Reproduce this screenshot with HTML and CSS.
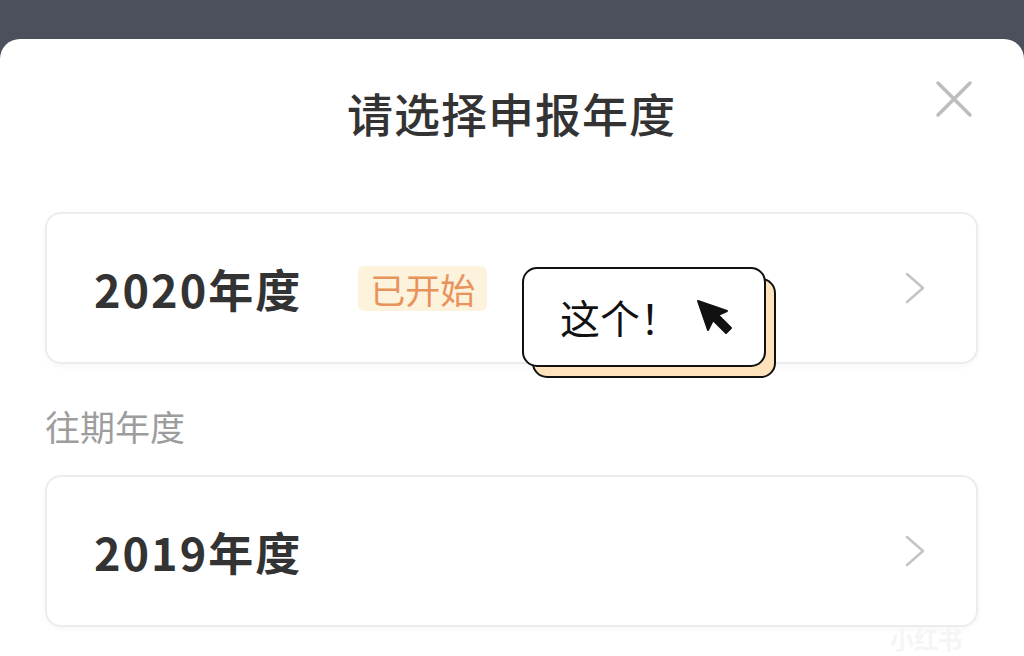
FILE: index.html
```html
<!DOCTYPE html>
<html lang="zh-CN">

<head>
  <meta charset="UTF-8">
  <meta name="viewport" content="width=device-width, initial-scale=1.0">
  <title>请选择申报年度</title>
  <link rel="stylesheet" href="styles.css">
</head>

<body>
  <div class="topbar"></div>
  <div class="sheet">
    <h1 class="title">请选择申报年度</h1>
    <button class="close" aria-label="关闭">
      <svg width="38" height="38" viewBox="0 0 38 38">
        <path d="M3 3 L35 35 M35 3 L3 35" stroke="#bdbdbd" stroke-width="3.5" stroke-linecap="round" fill="none" />
      </svg>
    </button>

    <div class="card current">
      <span class="year">2020年度</span>
      <span class="badge">已开始</span>
      <svg class="chevron" width="22" height="34" viewBox="0 0 22 34">
        <path d="M3 3 L19 17 L3 31" stroke="#c4c4c4" stroke-width="2.5" stroke-linecap="round" stroke-linejoin="round" fill="none" />
      </svg>
      <div class="tip">
        <div class="tip-back"></div>
        <div class="tip-front">
          <span>这个！</span>
          <svg width="38" height="36" viewBox="0 0 38 36">
            <path d="M2 2 L31 12 L22 16 L35 29 L30 34 L17 21 L12 31 Z" fill="#111" stroke="#111" stroke-width="2" stroke-linejoin="round" />
          </svg>
        </div>
      </div>
    </div>

    <div class="section">往期年度</div>

    <div class="card">
      <span class="year">2019年度</span>
      <svg class="chevron" width="22" height="34" viewBox="0 0 22 34">
        <path d="M3 3 L19 17 L3 31" stroke="#c4c4c4" stroke-width="2.5" stroke-linecap="round" stroke-linejoin="round" fill="none" />
      </svg>
    </div>

    <div class="mark">小红书</div>
  </div>
</body>

</html>
```

FILE: styles.css
```css
body {
  margin: 0;
  background-color: #4b505c;
  font-family: "Noto Sans CJK SC", "Noto Sans", sans-serif;
  color: #333;
  height: 656px;
  overflow: hidden;
}

.topbar {
  height: 39px;
}

.sheet {
  position: relative;
  background-color: white;
  border-radius: 20px 20px 0 0;
  height: 617px;
  padding: 50px 46px 0 45px;
  box-sizing: border-box;
}

.title {
  margin: 0 0 77px;
  font-size: 46px;
  line-height: 1;
  font-weight: 500;
  text-align: center;
  letter-spacing: 1px;
  color: #333;
}

.close {
  position: absolute;
  top: 41px;
  right: 51px;
  padding: 0;
  border: none;
  background: none;
}

.card {
  position: relative;
  display: flex;
  align-items: center;
  height: 152px;
  padding: 0 50px 0 47px;
  box-sizing: border-box;
  border: 2px solid #ececec;
  border-radius: 16px;
  box-shadow: 0 2px 6px rgba(0, 0, 0, 0.04);
}

.year {
  font-size: 45px;
  font-weight: 700;
  line-height: 1;
  letter-spacing: 2px;
  color: #333;
}

.badge {
  margin-left: 56px;
  padding: 5px 12px;
  font-size: 35px;
  line-height: 35px;
  background-color: #fdf2dc;
  color: #e8935c;
  border-radius: 6px;
}

.chevron {
  margin-left: auto;
}

.section {
  margin: 44px 0 32px;
  font-size: 35px;
  line-height: 1;
  color: #9d9d9d;
}

.tip {
  position: absolute;
  left: 475px;
  top: 53px;
  width: 244px;
  height: 100px;
}

.tip-back,
.tip-front {
  position: absolute;
  width: 244px;
  height: 100px;
  box-sizing: border-box;
  border: 2.5px solid #111;
  border-radius: 15px;
}

.tip-back {
  left: 10px;
  top: 11px;
  background-color: #fde2bb;
}

.tip-front {
  left: 0;
  top: 0;
  background-color: white;
  display: flex;
  align-items: center;
  padding: 0 30px 0 36px;
  justify-content: space-between;
}

.tip-front span {
  font-size: 40px;
  font-weight: 400;
  line-height: 1;
  color: #111;
}

.mark {
  position: absolute;
  right: 62px;
  bottom: 0;
  font-size: 24px;
  font-weight: 700;
  color: #f5f5f5;
}
```
